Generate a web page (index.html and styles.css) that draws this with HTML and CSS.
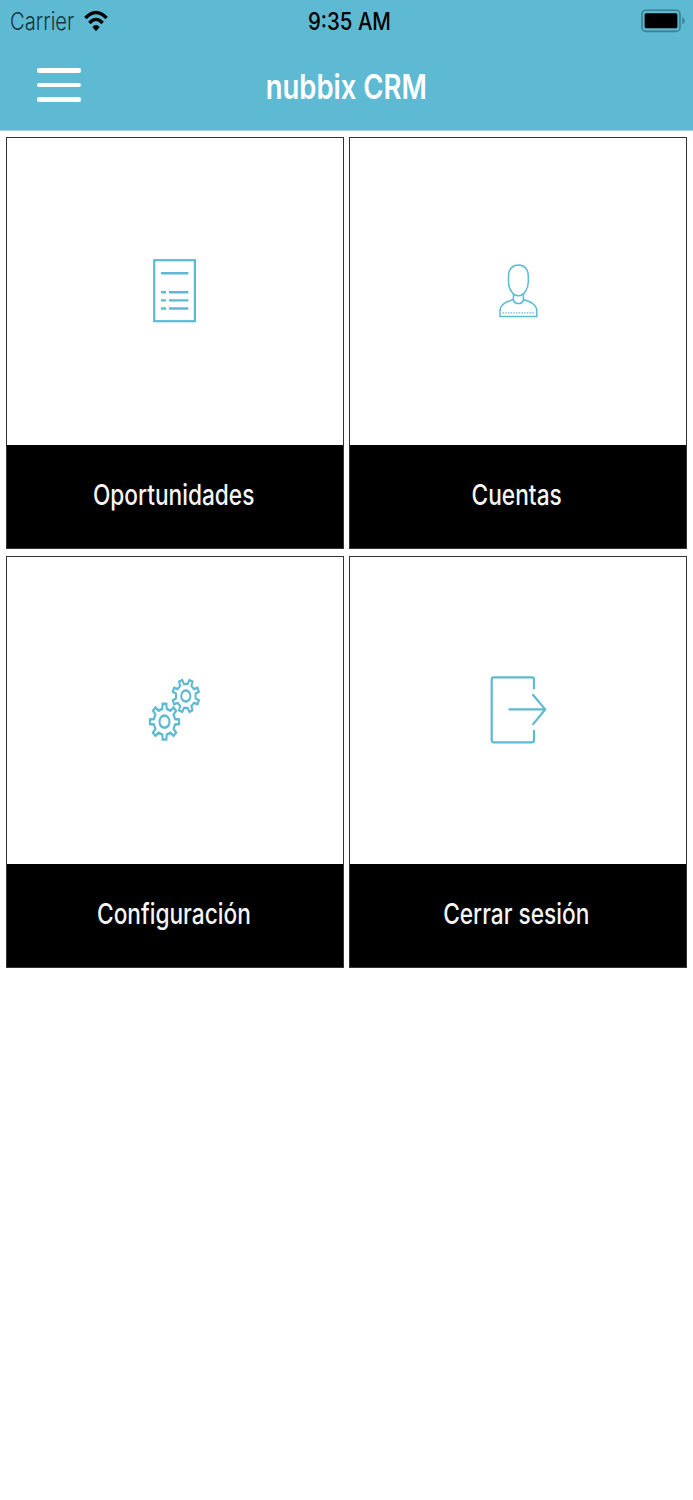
FILE: index.html
```
<!DOCTYPE html>
<html lang="es">
<head>
    <meta charset="UTF-8">
    <title>nubbix CRM</title>
    <link rel="stylesheet" href="styles.css">
</head>
<body>
    <div class="header">
        <div class="status-bar">
            <div class="status-left">
                <span class="carrier">Carrier</span>
                <svg class="wifi" width="24" height="22" viewBox="0 0 24 22">
                    <path d="M1.4 8 Q12 -3 22.6 8" fill="none" stroke="#000" stroke-width="3.4"/>
                    <path d="M5.4 13 Q12 5.8 18.6 13" fill="none" stroke="#000" stroke-width="3.4"/>
                    <path d="M8.3 17 Q12 13 15.7 17 L12 21.2 Z"/>
                </svg>
            </div>
            <span class="time">9:35 AM</span>
            <div class="status-right">
                <svg width="44" height="24" viewBox="0 0 44 24">
                    <rect x="1" y="1.2" width="38" height="21.2" rx="4" fill="none" stroke="#3b7f91" stroke-width="1.6"/>
                    <rect x="3.6" y="4.3" width="32.8" height="14.9" rx="1.5"/>
                    <path d="M41.3 8 Q43.8 9.5 43.8 11.8 T41.3 15.6 Z" fill="#3b7f91"/>
                </svg>
            </div>
        </div>
        <div class="navbar">
            <div class="menu-button">
                <span></span>
                <span></span>
                <span></span>
            </div>
            <h1>nubbix CRM</h1>
        </div>
    </div>

    <div class="container">
        <div class="card">
            <div class="card-icon">
                <svg width="70" height="80" viewBox="0 0 70 80">
                    <rect x="14.2" y="9.2" width="40.7" height="61" stroke-width="2.2"/>
                    <path d="M21 22.2H48.4M21 41.2H26M29 41.2H48.4M21 49.4H26M29 49.4H48.4M21 57.5H26M29 57.5H48.4" stroke-width="2.4"/>
                </svg>
            </div>
            <div class="card-label"><span>Oportunidades</span></div>
        </div>

        <div class="card">
            <div class="card-icon">
                <svg width="70" height="80" viewBox="0 0 70 80">
                    <path d="M35.4 14C41.5 14 45.3 18.5 45.3 25V31C45.3 38 40.8 44.8 35.4 44.8S25.5 38 25.5 31V25C25.5 18.5 29.3 14 35.4 14Z" stroke-width="1.5"/>
                    <path d="M30.4 43V48.5Q31.2 52.6 35.4 52.6T40.4 48.5V43" stroke-width="1.5"/>
                    <path d="M30.4 48.5C24 50.5 17 53 17 60V65.6H53.8V60C53.8 53 46.8 50.5 40.4 48.5" stroke-width="1.5"/>
                    <path d="M19.5 61.8H52" stroke-width="1.2" stroke-dasharray="1.5 1.2"/>
                </svg>
            </div>
            <div class="card-label"><span>Cuentas</span></div>
        </div>

        <div class="card">
            <div class="card-icon">
                <svg width="70" height="80" viewBox="0 0 70 80">
                    <defs>
                        <path id="gear" d="M-2.2 -10.6L-1.9 -14.6H1.9L2.2 -10.6L5.9 -9.05L9 -11.6L11.6 -9L9.05 -5.9L10.6 -2.2L14.6 -1.9V1.9L10.6 2.2L9.05 5.9L11.6 9L9 11.6L5.9 9.05L2.2 10.6L1.9 14.6H-1.9L-2.2 10.6L-5.9 9.05L-9 11.6L-11.6 9L-9.05 5.9L-10.6 2.2L-14.6 1.9V-1.9L-10.6 -2.2L-9.05 -5.9L-11.6 -9L-9 -11.6L-5.9 -9.05Z"/>
                    </defs>
                    <g transform="translate(24.5 51.7) scale(1 1.22)" stroke-width="2.1">
                        <use href="#gear"/>
                        <circle r="5"/>
                    </g>
                    <g transform="translate(45.8 26) scale(.92 1.12)" stroke-width="2.2">
                        <use href="#gear" transform="rotate(22.5)"/>
                        <circle r="5"/>
                    </g>
                </svg>
            </div>
            <div class="card-label"><span>Configuración</span></div>
        </div>

        <div class="card">
            <div class="card-icon">
                <svg width="70" height="80" viewBox="0 0 70 80">
                    <path d="M51 19.3V9.3Q51 7.3 49 7.3H10.7Q8.7 7.3 8.7 9.3V70.3Q8.7 72.3 10.7 72.3H49Q51 72.3 51 70.3V60" stroke-width="2.2"/>
                    <path d="M25.5 39.4H62M49.5 24.2L62.2 39.4L49.5 54.9" stroke-width="2.2"/>
                </svg>
            </div>
            <div class="card-label"><span>Cerrar sesión</span></div>
        </div>
    </div>
</body>
</html>
```
FILE: styles.css
```
body {
    font-family: Inter, Roboto, sans-serif;
    margin: 0;
    padding: 0;
    background-color: #fff;
    color: #000;
}
.header {
    height: 130px;
    background-color: #5dbad2;
    border-bottom: 1px solid #b4cdd4;
}
.status-bar {
    display: grid;
    grid-template-columns: 1fr auto 1fr;
    align-items: center;
    height: 42px;
    padding: 0 8px 0 10px;
    font-size: 24px;
}
.status-left {
    display: flex;
    align-items: center;
}
.carrier {
    width: 74px;
    color: #17323a;
    font-weight: 300;
    transform: scaleX(0.84);
    transform-origin: left;
}
.status-right {
    display: flex;
    justify-content: flex-end;
}
.time {
    padding: 1px 0 0 4px;
    transform: scaleX(0.85);
    font-weight: 450;
}
.navbar {
    display: grid;
    grid-template-columns: 1fr auto 1fr;
    align-items: center;
    height: 88px;
}
.menu-button {
    display: flex;
    flex-direction: column;
    gap: 10px;
    width: 44px;
    margin: 0 0 2px 37px;
}
.menu-button span {
    height: 4.4px;
    border-radius: 2px;
    background-color: #fff;
}
.navbar h1 {
    margin: 0;
    padding-top: 1px;
    color: #fff;
    font-size: 33.5px;
    font-weight: 600;
    transform: scaleX(0.82);
}
.container {
    display: grid;
    grid-template-columns: 338px 338px;
    gap: 7px 5px;
    padding: 6px 6px 0;
}
.card {
    box-sizing: border-box;
    height: 412px;
    border: 1px solid #333;
}
.card-icon {
    box-sizing: border-box;
    display: flex;
    align-items: center;
    justify-content: center;
    height: 307px;
    padding-bottom: 2px;
}
.card-icon svg {
    fill: none;
    stroke: #5dbad2;
}
.card-label {
    box-sizing: border-box;
    display: flex;
    align-items: center;
    justify-content: center;
    height: 103px;
    padding: 0 3px 3px 0;
    background-color: #000;
    color: #f5f5f5;
    font-size: 28px;
    font-weight: 450;
}
.card-label span {
    transform: scaleX(0.81);
}
```
